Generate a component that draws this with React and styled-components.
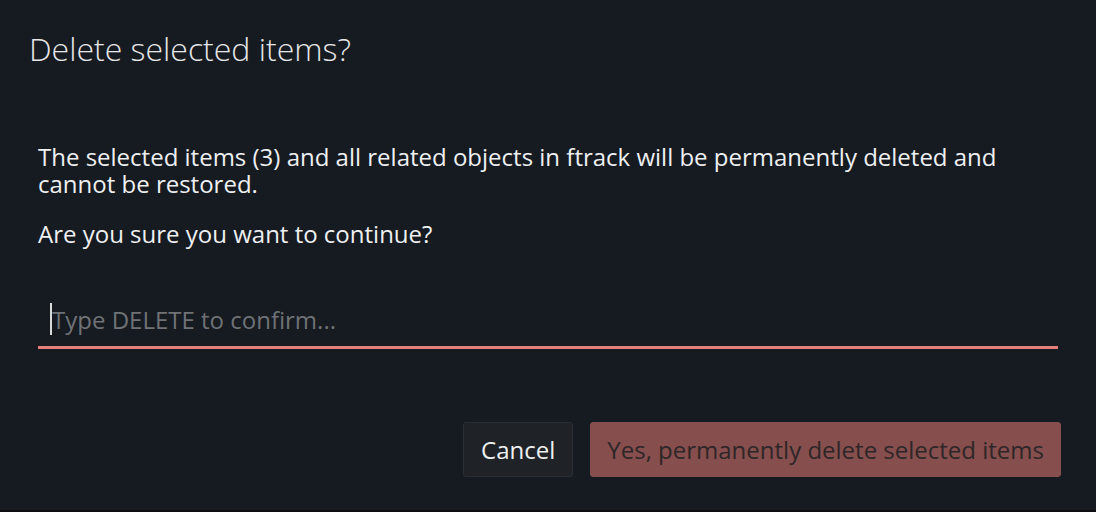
import React from "react";
import styled, { createGlobalStyle } from "styled-components";

const GlobalStyle = createGlobalStyle`
  html, body {
    margin: 0;
    padding: 0;
    background: #161a21;
  }
  body {
    font-family: "Open Sans", "Noto Sans", sans-serif;
    color: #e8e9ea;
  }
`;

const Dialog = styled.div`
  width: 1096px;
  height: 512px;
  box-sizing: border-box;
  background: #161a21;
  border-bottom: 2px solid #0d0f13;
  display: flex;
  flex-direction: column;
`;

const Title = styled.h2`
  margin: 0;
  padding: 29px 29px 0;
  font-size: 32px;
  font-weight: 300;
  line-height: 40px;
  color: #e6e7e8;
`;

const Body = styled.div`
  padding: 74px 38px 0;
`;

const Paragraph = styled.p`
  margin: 0 0 ${(p) => p.gap || 0}px;
  font-size: 24px;
  line-height: 27px;
  color: #eef0f1;
  max-width: 980px;
`;

const Field = styled.div`
  margin-top: 45px;
  height: 54px;
  border-bottom: 3px solid #e57f7a;
  display: flex;
  align-items: center;
  padding-left: 12px;
`;

const Caret = styled.span`
  width: 2px;
  height: 32px;
  background: #d9dadb;
`;

const Input = styled.input`
  flex: 1;
  height: 34px;
  background: transparent;
  border: none;
  outline: none;
  padding: 0;
  font-family: "Open Sans", "Noto Sans", sans-serif;
  font-size: 24px;
  color: #e8e9ea;
  &::placeholder {
    color: #6f7276;
  }
`;

const Footer = styled.div`
  margin-top: auto;
  padding: 0 35px 33px;
  display: flex;
  justify-content: flex-end;
  gap: 17px;
`;

const Button = styled.button`
  height: 55px;
  padding: 0 ${(p) => (p.danger ? 16 : 17)}px;
  border-radius: 3px;
  font-family: "Open Sans", "Noto Sans", sans-serif;
  font-size: 24px;
  cursor: pointer;
  border: 1px solid ${(p) => (p.danger ? "#864f4d" : "#2b2f35")};
  background: ${(p) => (p.danger ? "#864f4d" : "#1f2328")};
  color: ${(p) => (p.danger ? "#2e2628" : "#eef0f1")};
`;

export default function App() {
  return (
    <>
      <GlobalStyle />
      <Dialog>
        <Title>Delete selected items?</Title>
        <Body>
          <Paragraph gap={23}>
            The selected items (3) and all related objects in ftrack will be
            permanently deleted and cannot be restored.
          </Paragraph>
          <Paragraph>Are you sure you want to continue?</Paragraph>
          <Field>
            <Caret />
            <Input placeholder="Type DELETE to confirm..." />
          </Field>
        </Body>
        <Footer>
          <Button>Cancel</Button>
          <Button danger>Yes, permanently delete selected items</Button>
        </Footer>
      </Dialog>
    </>
  );
}
